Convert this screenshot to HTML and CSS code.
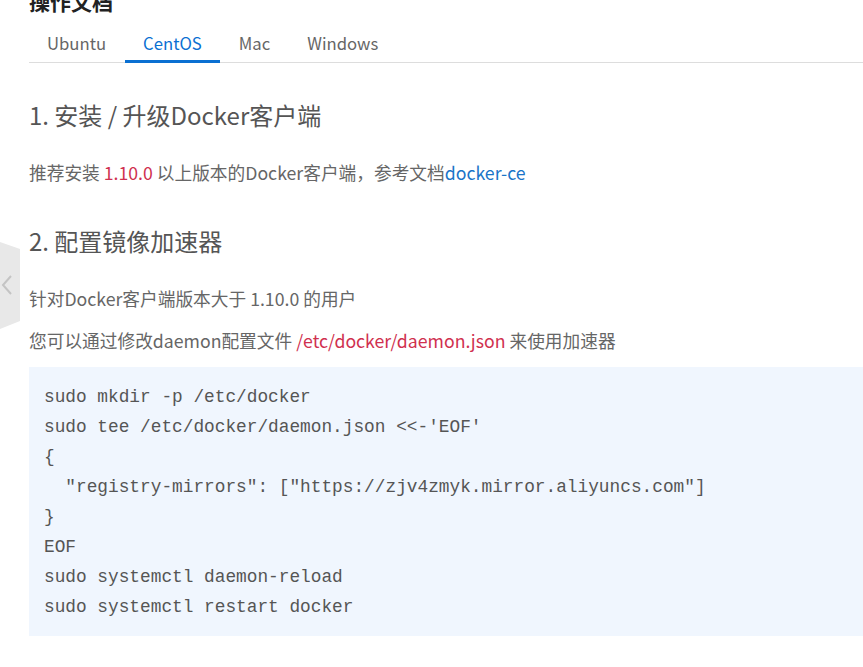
FILE: index.html
```html
<!DOCTYPE html>
<html lang="zh-CN">
  <head>
    <meta charset="UTF-8" />
    <meta name="viewport" content="width=device-width, initial-scale=1.0" />
    <title>镜像加速器 - 操作文档</title>
    <link rel="stylesheet" href="styles.css">
  </head>
  <body>
    <div class="side-toggle">
      <svg width="12" height="22" viewBox="0 0 12 22">
        <polyline points="10,2 2,11 10,20" fill="none" stroke="#c4c4c4" stroke-width="2" />
      </svg>
    </div>

    <div class="doc">
      <h2 class="doc-title">操作文档</h2>

      <div class="tabs">
        <a href="#ubuntu" class="tab">Ubuntu</a>
        <a href="#centos" class="tab active">CentOS</a>
        <a href="#mac" class="tab">Mac</a>
        <a href="#windows" class="tab">Windows</a>
      </div>

      <div class="tab-content">
        <h3 class="step">1. 安装 / 升级Docker客户端</h3>
        <p class="text text-first">
          推荐安装 <span class="code-inline">1.10.0</span> 以上版本的Docker客户端，参考文档<a href="#docker-ce" class="link">docker-ce</a>
        </p>

        <h3 class="step step-next">2. 配置镜像加速器</h3>
        <p class="text text-first">针对Docker客户端版本大于 1.10.0 的用户</p>
        <p class="text">
          您可以通过修改daemon配置文件 <span class="code-inline">/etc/docker/daemon.json</span> 来使用加速器
        </p>

        <pre class="code-block">sudo mkdir -p /etc/docker
sudo tee /etc/docker/daemon.json &lt;&lt;-'EOF'
{
  "registry-mirrors": ["https://zjv4zmyk.mirror.aliyuncs.com"]
}
EOF
sudo systemctl daemon-reload
sudo systemctl restart docker</pre>
      </div>
    </div>
  </body>
</html>
```

FILE: styles.css
```css
body {
  margin: 0;
  padding: 0;
  background-color: #fff;
  font-family: "Noto Sans CJK SC", "Noto Sans", sans-serif;
  color: #666;
  overflow: hidden;
}

.side-toggle {
  position: absolute;
  left: 0;
  top: 242px;
  width: 20px;
  height: 87px;
  background-color: #e8e8e8;
  clip-path: polygon(0 0, 100% 7px, 100% calc(100% - 8px), 0 100%);
  display: flex;
  align-items: center;
}
.side-toggle svg {
  margin-left: 1px;
  margin-top: -2px;
}

.doc {
  padding-left: 29px;
}

.doc-title {
  margin: -13px 0 0 0;
  font-size: 21px;
  line-height: 28px;
  font-weight: bold;
  color: #222;
}

.tabs {
  display: flex;
  margin-top: 7px;
  border-bottom: 1px solid #ddd;
}
.tab {
  padding: 8px 18px 4px;
  font-size: 16.7px;
  line-height: 26px;
  color: #666;
  text-decoration: none;
  border-bottom: 3px solid transparent;
  margin-bottom: -1px;
}
.tab + .tab {
  margin-left: 1px;
}
.tab.active {
  color: #0a70d2;
  border-bottom-color: #0a70d2;
}

.step {
  margin: 35px 0 0 0;
  font-size: 24px;
  line-height: 34px;
  font-weight: normal;
  color: #555;
}
.step-next {
  margin-top: 38px;
}

.text {
  margin: 14px 0 0 0;
  font-size: 17.7px;
  line-height: 28px;
}
.text-first {
  margin-top: 26px;
}

.code-inline {
  color: #d0314f;
}
.link {
  color: #1a74c8;
  text-decoration: none;
}

.code-block {
  margin: 13px 0 0 0;
  padding: 15px 15px 14px;
  background-color: #f0f6fe;
  font-family: "Liberation Mono", "DejaVu Sans Mono", monospace;
  font-size: 17.8px;
  line-height: 30px;
  color: #555;
}
```
